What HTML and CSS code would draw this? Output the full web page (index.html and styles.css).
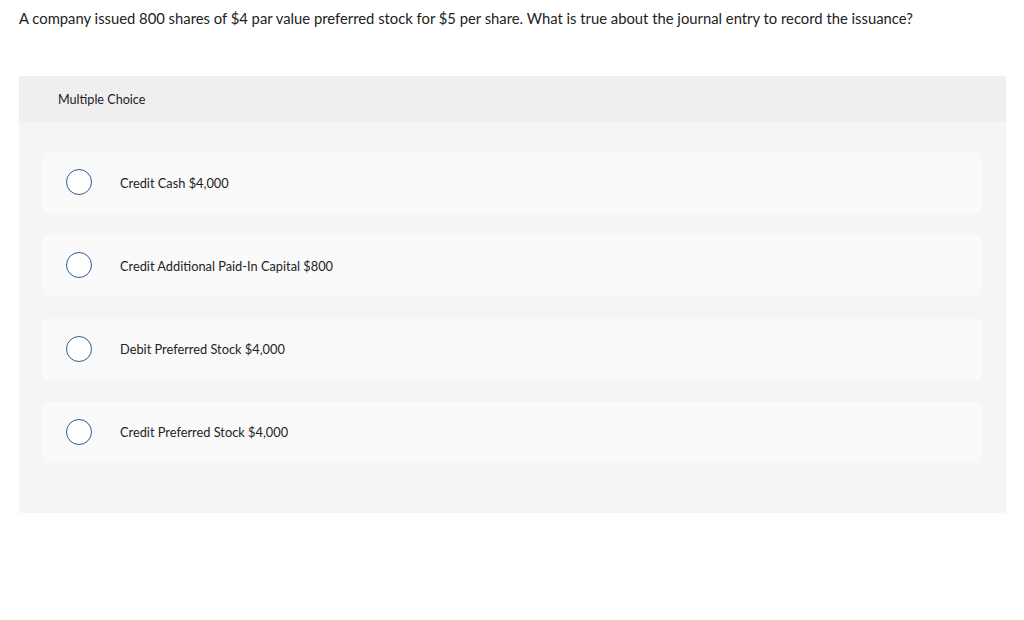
FILE: index.html
```html
<!DOCTYPE html>
<html>
<head>
<meta charset="utf-8">
<link rel="stylesheet" href="styles.css">
</head>
<body>
<div class="page">
  <p class="question">A company issued 800 shares of $4 par value preferred stock for $5 per share. What is true about the journal entry to record the issuance?</p>
  <div class="card">
    <div class="card-head">Multiple Choice</div>
    <div class="options">
      <div class="option"><span class="radio"></span><span class="label">Credit Cash $4,000</span></div>
      <div class="option"><span class="radio"></span><span class="label">Credit Additional Paid-In Capital $800</span></div>
      <div class="option"><span class="radio"></span><span class="label">Debit Preferred Stock $4,000</span></div>
      <div class="option"><span class="radio"></span><span class="label">Credit Preferred Stock $4,000</span></div>
    </div>
  </div>
</div>
</body>
</html>
```
FILE: styles.css
```css
html, body {
  margin: 0;
  padding: 0;
  background: #fff;
}
body {
  font-family: "Lato", "Open Sans", sans-serif;
  color: #222;
}
.page {
  padding: 8px 18px 0 19px;
}
.question {
  margin: 0;
  font-size: 14.8px;
  line-height: 21px;
  color: #222;
}
.card {
  margin-top: 47px;
  background: #f5f5f5;
  border-radius: 3px;
  overflow: hidden;
  padding-bottom: 50px;
}
.card-head {
  background: #efefef;
  height: 46px;
  display: flex;
  align-items: center;
  padding-left: 39px;
  font-size: 12.6px;
  color: #222;
}
.options {
  padding: 30px 25px 0 24px;
  display: flex;
  flex-direction: column;
  gap: 22.3px;
}
.option {
  background: #fafafa;
  border-radius: 3px;
  height: 61px;
  display: flex;
  align-items: center;
  padding-left: 23px;
}
.radio {
  width: 24px;
  height: 24px;
  border: 1px solid #2d5d91;
  border-radius: 50%;
  background: #fff;
  flex: none;
  margin-top: -1px;
}
.label {
  margin-left: 28px;
  font-size: 12.8px;
  color: #222;
}
```
